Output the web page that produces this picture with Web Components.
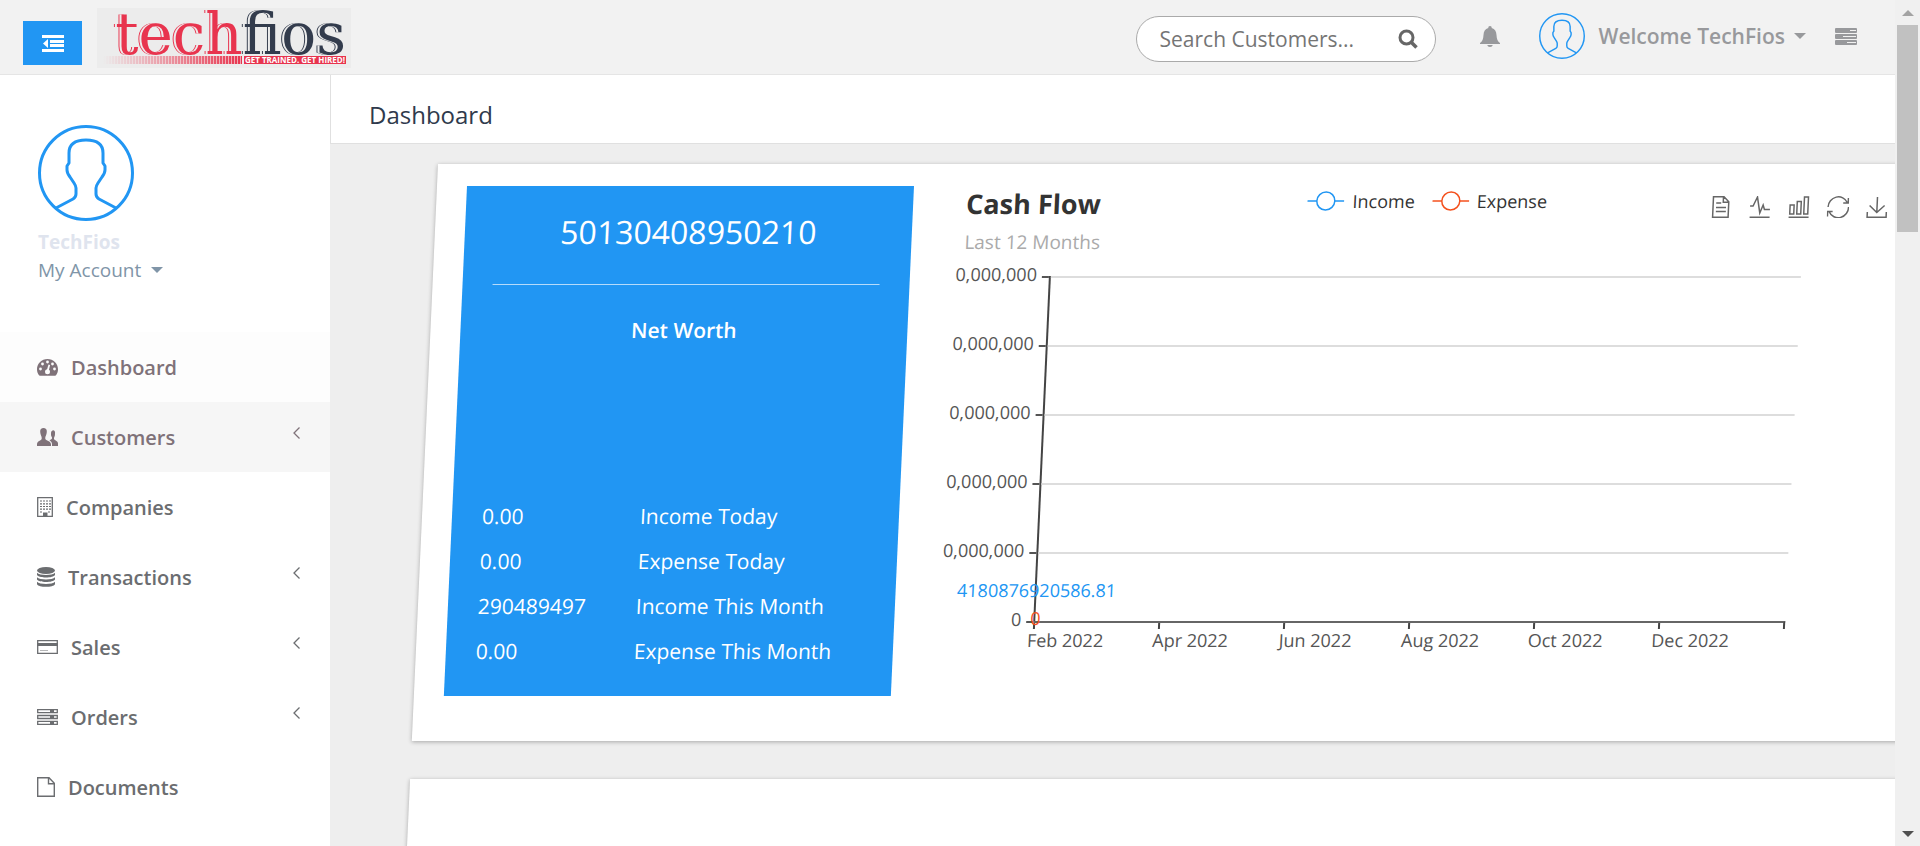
<!DOCTYPE html>
<html lang="en">
<head>
<meta charset="utf-8">
<title>Dashboard - TechFios</title>
<style>
html, body { margin: 0; height: 100%; overflow: hidden; }
body { font-family: "Open Sans", "Noto Sans", sans-serif; color: #333; background: #eee; }
</style>
</head>
<body>
<app-shell>
  <app-header slot="header"></app-header>
  <side-bar slot="side">
    <nav-item icon="gauge" state="current">Dashboard</nav-item>
    <nav-item icon="users" state="hover" more>Customers</nav-item>
    <nav-item icon="building">Companies</nav-item>
    <nav-item icon="database" more>Transactions</nav-item>
    <nav-item icon="card" more>Sales</nav-item>
    <nav-item icon="server" more>Orders</nav-item>
    <nav-item icon="file">Documents</nav-item>
  </side-bar>
  <page-title>Dashboard</page-title>
  <slide-in>
    <panel-card>
      <net-worth></net-worth>
      <cash-flow></cash-flow>
    </panel-card>
    <panel-card></panel-card>
  </slide-in>
</app-shell>
<script>
const ICONS = {
  outdent: ['0 0 22 17', '<g fill="#fff"><path d="M0 0h22v3H0zM8 5h14v3H8zM8 9h14v3H8zM0 14h22v3H0z"/><path d="M6 4v9L1 8.500z"/></g>'],
  search: ['0 0 20 20', '<g fill="none" stroke="currentColor"><circle cx="8.500" cy="8.500" r="6.500" stroke-width="3"/><path d="M13.500 13.500l5 5" stroke-width="3.500"/></g>'],
  bell: ['0 0 20 21', '<path fill="currentColor" d="M10 0c1.200 0 1.800.8 1.700 1.900C15 2.700 16.300 5.200 16.500 9c.2 4 1.200 6.500 3.500 8v1H0v-1c2.300-1.500 3.300-4 3.500-8 .2-3.800 1.500-6.300 4.800-7.100C8.200.8 8.800 0 10 0zM7.300 19h5.400c-.2 1.300-1.200 2-2.700 2s-2.500-.7-2.700-2z"/>'],
  caret: ['0 0 12 6', '<path fill="currentColor" d="M0 0h12L6 6z"/>'],
  tasks: ['0 0 22 17', '<g fill="currentColor"><rect width="22" height="5" rx="1"/><rect y="6" width="22" height="5" rx="1"/><rect y="12" width="22" height="5" rx="1"/></g><path d="M15 2.500h6M8 8.500h13M12 14.500h9" stroke="#f2f2f2"/>'],
  avatar: ['0 0 96 96', '<g fill="none" stroke="#2196f3"><circle cx="48" cy="48" r="46.500"/><path stroke-linejoin="round" d="M18 83L35 74Q38 72 38 69V63Q38 61 36 58L32 52Q29 48 29 45V41L31 38V28Q31 15 48 15Q65 15 65 28V38L67 41V45Q67 48 64 52L60 58Q58 61 58 63V69Q58 72 61 74L78 83"/></g>'],
  gauge: ['0 0 21 17', '<path fill="currentColor" d="M10.500 0C16.300 0 21 4.500 21 10.300c0 2.400-.7 4.200-1.800 5.700-.3.500-.6.700-1.200.7H3c-.6 0-.9-.2-1.200-.7C.7 14.500 0 12.700 0 10.300 0 4.500 4.700 0 10.500 0z"/><g fill="#fdfdfd"><circle cx="3.500" cy="10" r="1.400"/><circle cx="5.500" cy="5" r="1.400"/><circle cx="10.500" cy="3" r="1.400"/><circle cx="15.500" cy="5" r="1.400"/><circle cx="17.500" cy="10" r="1.400"/><circle cx="10.500" cy="12.800" r="2.500"/><path d="M11.500 5.500l1.600.4-1.500 6h-2z"/></g>'],
  users: ['0 0 21 18', '<g fill="currentColor"><path d="M14 6q-.5-3 1.500-3.600 3-.4 2.500 3.600c.2 2.500-1.300 3-1 5 .2 1.400 4 1.500 4 4.500V18h-6v-2c0-2-1.500-3-2.500-3.800l1.500-.7c1-.6 1.300-1.200.9-2.200C14.300 8.300 13.900 7.500 14 6z"/><path d="M3.200 4C3 1 4.400 0 6.500 0S10 1 9.800 4c-.1 3.300-1.900 4.300-1.500 6.700.4 2.300 5.700 2 5.700 5.600V18H0v-1.700c0-3.600 4.300-3.300 4.700-5.600C5.100 8.300 3.300 7.300 3.200 4z"/></g>'],
  building: ['0 0 16 20', '<path fill="none" stroke="currentColor" stroke-width="1.300" d="M.7.700h14.600v18.600H.7z"/><path stroke="currentColor" stroke-width="1.200" stroke-dasharray="2 1" d="M3 4h11M3 6.800h11M3 9.500h11M3 12.200h11M3 15h2M11 15h3"/><path fill="currentColor" d="M6 15.500h4.500V19H6z"/>'],
  database: ['0 0 18 20', '<g fill="currentColor"><ellipse cx="9" cy="3.500" rx="9" ry="3.500"/><path d="M0 5.700c2.500 3 15.500 3 18 0v2.200c-1.500 3.300-16.500 3.300-18 0zM0 10.200c2.500 3 15.500 3 18 0v2.200c-1.500 3.300-16.500 3.300-18 0zM0 14.700c2.500 3 15.500 3 18 0v2.500c-1.500 3.500-16.500 3.500-18 0z"/></g>'],
  card: ['0 0 21 14', '<path fill="none" stroke="currentColor" stroke-width="1.300" d="M.7.700h19.600v12.600H.7z"/><path fill="currentColor" d="M0 3h21v3H0z"/><path stroke="currentColor" stroke-opacity=".5" d="M3 10.500h8"/>'],
  server: ['0 0 21 16', '<g fill="none" stroke="currentColor" stroke-width="1.300"><path d="M.7.700h19.600v3H.7zM.7 6.500h19.600v3H.7zM.7 12.300h19.600v3H.7z"/></g><path fill="currentColor" d="M13 1h4v2.500h-4zM13 7h4v2.500h-4zM13 13h4v2.500h-4z"/>'],
  file: ['0 0 18 20', '<path fill="none" stroke="currentColor" stroke-width="1.400" d="M.7.700H12l5.300 5.500v13.100H.7zM11.500.7v6h5.800"/>'],
  chevron: ['0 0 7 12', '<path fill="none" stroke="currentColor" stroke-width="1.300" d="M6.500.5L1 6l5.500 5.500"/>'],
  page: ['0 0 22 22', '<path fill="none" stroke="currentColor" stroke-width="1.500" d="M3 .8h10.500l5 5v15.400H3zM13 .8v5.500h5.500M6 7h5M6 11.500h10M6 15.500h10"/>'],
  line: ['0 0 22 22', '<path fill="none" stroke="currentColor" stroke-width="1.500" d="M1 21.200h20M1 10h3L8 1l3 16 3-8 1.500 4.500H21"/>'],
  bars: ['0 0 22 22', '<path fill="none" stroke="currentColor" stroke-width="1.500" d="M1 21.200h20M2 9h4v9H2zM9 5.500h4V18H9zM16 1h4v17h-4z"/>'],
  refresh: ['0 0 22 22', '<path fill="none" stroke="currentColor" stroke-width="1.500" d="M1 11A10 10 0 0 1 20 6.500M21 2v5h-5M21.500 11A10 10 0 0 1 2.500 16M.8 20.500v-5h5"/>'],
  download: ['0 0 22 22', '<path fill="none" stroke="currentColor" stroke-width="1.500" d="M11 1v15M3.500 9.500L11 16.500l7.500-7M1.500 16v5.200h19V16"/>'],
  up: ['0 0 12 6', '<path fill="#a3a3a3" d="M6 0l6 6H0z"/>'],
  down: ['0 0 12 6', '<path fill="#505050" d="M0 0h12L6 6z"/>']
};
const icon = (name, w, h, extra = '') =>
  `<svg aria-hidden="true" width="${w}" height="${h}" viewBox="${ICONS[name][0]}" ${extra}>${ICONS[name][1]}</svg>`;

const BASE = `<style>
:host,*{box-sizing:border-box}
svg{display:block;flex:none}
a{color:inherit;text-decoration:none}
button{font:inherit;color:inherit;background:none;border:0;padding:0;cursor:pointer;display:flex;align-items:center;justify-content:center}
</style>`;

function define(name, render) {
  customElements.define(name, class extends HTMLElement {
    constructor() {
      super();
      this.attachShadow({ mode: 'open' }).innerHTML = BASE + render(this);
    }
  });
}

define('app-shell', () => `<style>
:host{display:grid;grid-template:auto minmax(0,1fr) / 330px minmax(0,1fr) 25px;height:100vh;overflow:hidden}
.head{grid-column:1 / 3}
main{overflow:hidden;background:#eee}
scroll-rail{grid-column:3;grid-row:1 / 3}
</style>
<div class="head"><slot name="header"></slot></div>
<slot name="side"></slot>
<main><slot></slot></main>
<scroll-rail></scroll-rail>`);

define('scroll-rail', () => `<style>
:host{display:flex;flex-direction:column;align-items:center;background:#f0f0f0}
.arrow{height:25px;flex:none;display:flex;align-items:center}
.track{flex:1;width:21px}
.thumb{height:26%;background:#c1c1c1}
</style>
<div class="arrow">${icon('up', 12, 6)}</div><div class="track"><div class="thumb"></div></div><div class="arrow">${icon('down', 12, 6)}</div>`);

define('app-header', () => `<style>
:host{display:flex;align-items:center;height:75px;padding:0 38px 2px 23px;background:#f2f2f2;border-bottom:1px solid #e5e5e5;color:#98999c}
.toggle{width:59px;height:44px;background:#2196f3;margin:14px 15px 0 0}
brand-logo{margin-top:4px}
.search{display:flex;align-items:center;width:300px;height:46px;margin:6px 44px 0 auto;padding:0 17px 0 23px;border:1px solid #aaa;border-radius:23px;background:#fff;color:#666}
input{flex:1;min-width:0;border:0;outline:0;padding:0;background:none;font:21px "Open Sans","Noto Sans",sans-serif;color:#555}
input::placeholder{color:#757575;opacity:1}
.user{display:flex;align-items:center;gap:14px;margin:0 29px 0 39px;font-size:21px;font-weight:600}
.user .name{display:flex;align-items:center;gap:9px}
</style>
<button class="toggle" aria-label="Toggle menu">${icon('outdent', 22, 17)}</button>
<brand-logo></brand-logo>
<form class="search" role="search"><input type="search" aria-label="Search customers" placeholder="Search Customers..."><button type="button" aria-label="Search">${icon('search', 20, 20)}</button></form>
<button aria-label="Notifications">${icon('bell', 20, 21)}</button>
<a class="user" href="#">${icon('avatar', 46, 46, 'stroke-width="3"')}<span class="name">Welcome TechFios ${icon('caret', 12, 6)}</span></a>
<button aria-label="Tasks">${icon('tasks', 22, 17)}</button>`);

define('brand-logo', () => `<style>
:host{display:flex;flex-direction:column;align-items:flex-end;width:254px;height:60px;padding-right:5px;background:#ececec}
.word{height:48px;font:58px/52px "DejaVu Serif",serif;color:#e8344e;text-shadow:-2px 0 #ececec,-3px 0 #e8344e}
.word span{color:#333c4d;text-shadow:-2px 0 #ececec,-3px 0 #333c4d}
.strip{display:flex;width:243px}
.fade{flex:1;height:8px;margin-right:2px;background:linear-gradient(90deg,#ececec,#ececec00),repeating-linear-gradient(90deg,#e8344e 0 2px,#f1a3ae 2px 3px)}
.tag{padding:0 1px;background:#e8344e;color:#fff;font:bold 8px/8px "Open Sans",sans-serif;white-space:nowrap}
</style>
<div class="word">tech<span>fios</span></div>
<div class="strip"><div class="fade"></div><div class="tag">GET TRAINED. GET HIRED!</div></div>`);

define('side-bar', () => `<style>
:host{display:flex;flex-direction:column;background:#fff;overflow:hidden}
.profile{display:flex;flex-direction:column;padding:50px 38px 48px;font-size:19px;line-height:28px}
.name{margin-top:7px;font-weight:700;color:#dfe4ee}
.account{display:flex;align-items:center;gap:10px;color:#8095a8}
nav{display:flex;flex-direction:column}
</style>
<div class="profile">${icon('avatar', 96, 96, 'stroke-width="3"')}
<span class="name">TechFios</span><a class="account" href="#">My Account ${icon('caret', 12, 6)}</a></div>
<nav><slot></slot></nav>`);

define('nav-item', el => {
  const name = el.getAttribute('icon');
  const [, , w, h] = ICONS[name][0].split(' ');
  return `<style>
:host{display:block;color:#6b6d70;font-size:20px;font-weight:600}
:host([state=current]){background:#fdfdfd;color:#7f7279}
:host([state=hover]){background:#f6f6f6;color:#7f7279}
a{display:flex;align-items:center;gap:13px;height:70px;padding:0 30px 0 37px}
.more{margin:0 0 8px auto}
</style>
<a href="#">${icon(name, w, h)}<span><slot></slot></span>${el.hasAttribute('more') ? icon('chevron', 7, 12, 'class="more"') : ''}</a>`;
});

define('page-title', () => `<style>
:host{display:block;background:#fff;border:solid #e0e0e0;border-width:0 0 1px 1px;padding:23px 38px 11px}
h1{margin:0;font-size:24px;line-height:34px;font-weight:400;color:#2f3a4c}
</style><h1><slot></slot></h1>`);

/* Content entering from the right: it leans while it is still moving. */
define('slide-in', () => `<style>
:host{display:flex;flex-direction:column;gap:38px;padding:20px 30px;transform-origin:0 20px;transform:translateX(78px) skewX(-2.6deg)}
</style><slot></slot>`);

define('panel-card', () => `<style>
:host{display:flex;gap:30px;min-height:577px;padding:22px 30px 45px;background:#fff;box-shadow:0 1px 4px rgba(0,0,0,.3)}
</style><slot></slot>`);

define('net-worth', () => `<style>
:host{display:flex;flex-direction:column;width:447px;flex:none;padding:21px 30px 22px;background:#2196f3;color:#fff;font-size:21px;line-height:45px}
.total{font-size:32px;line-height:50px;text-align:center;padding-bottom:27px;border-bottom:1px solid #b5dbfb}
.label{margin-top:23px;text-align:center;font-weight:600}
table{border-collapse:collapse;margin-top:auto;text-align:left}
th,td{padding:0;font-weight:400}
td{width:158px}
</style>
<div class="total">50130408950210</div><div class="label">Net Worth</div>
<table>
<tr><td>0.00</td><th scope="row">Income Today</th></tr>
<tr><td>0.00</td><th scope="row">Expense Today</th></tr>
<tr><td>290489497</td><th scope="row">Income This Month</th></tr>
<tr><td>0.00</td><th scope="row">Expense This Month</th></tr>
</table>`);

define('cash-flow', () => {
  const key = (label, c) => `<button><svg width="37" height="20" viewBox="0 0 37 20" fill="#fff" stroke="${c}" stroke-width="1.500" aria-hidden="true"><path d="M0 10h37"/><circle cx="18.500" cy="10" r="9"/></svg>${label}</button>`;
  const tools = [['page', 'Data view'], ['line', 'Line'], ['bars', 'Bar'], ['refresh', 'Restore'], ['download', 'Save as image']];
  return `<style>
:host{display:block;flex:1;min-width:0;font-size:18px;line-height:24px;color:#333}
.top{display:grid;grid-template-columns:1fr auto 1fr;height:90px;padding:0 23px}
h2{margin:0;font-size:27px;line-height:36px}
.sub{color:#aaa;font-size:19px;line-height:40px}
.legend,.tools{display:flex;align-items:flex-start}
.legend{gap:17px;padding-top:3px}
.legend button{gap:8px}
.tools{gap:17px;justify-content:flex-end;padding-top:10px;color:#666}
.plot{display:grid;grid-template-columns:109px 1fr;padding-right:107px;color:#555}
.ticks{display:flex;flex-direction:column;text-align:right}
.ticks div{height:69px;display:flex;align-items:flex-start;justify-content:flex-end}
.ticks span{height:0;line-height:0;padding-right:5px;margin-top:-2px}
.ticks i{width:7px;height:2px;background:#555}
.ticks div:last-child{height:0}
.grid{position:relative;display:grid;grid-template-rows:repeat(5,69px);border-left:2px solid #444}
.grid div{border-top:2px solid #ddd}
.pt{position:absolute;left:0;transform:translateX(-50%)}
.pt.in{bottom:19px;color:#2196f3}
.pt.ex{bottom:-9px;color:#f4511e}
.months{grid-column:2;display:grid;grid-template-columns:repeat(6,1fr);border-top:2px solid #666;border-right:2px solid #444;height:8px}
.months div{border-left:2px solid #444;height:6px}
.months span{display:flex;justify-content:center;width:50%;padding-top:5px;white-space:nowrap}
</style>
<div class="top">
<div><h2>Cash Flow</h2><div class="sub">Last 12 Months</div></div>
<div class="legend">${key('Income', '#2196f3')}${key('Expense', '#f4511e')}</div>
<div class="tools">${tools.map(([n, t]) => `<button aria-label="${t}">${icon(n, 22, 22)}</button>`).join('')}</div>
</div>
<div class="plot">
<div class="ticks">${['0,000,000', '0,000,000', '0,000,000', '0,000,000', '0,000,000', '0'].map(t => `<div><span>${t}</span><i></i></div>`).join('')}</div>
<div class="grid"><div></div><div></div><div></div><div></div><div></div>
<span class="pt in">4180876920586.81</span><span class="pt ex">0</span></div>
<div class="months">${['Feb', 'Apr', 'Jun', 'Aug', 'Oct', 'Dec'].map(m => `<div><span>${m} 2022</span></div>`).join('')}</div>
</div>`;
});
</script>
</body>
</html>
